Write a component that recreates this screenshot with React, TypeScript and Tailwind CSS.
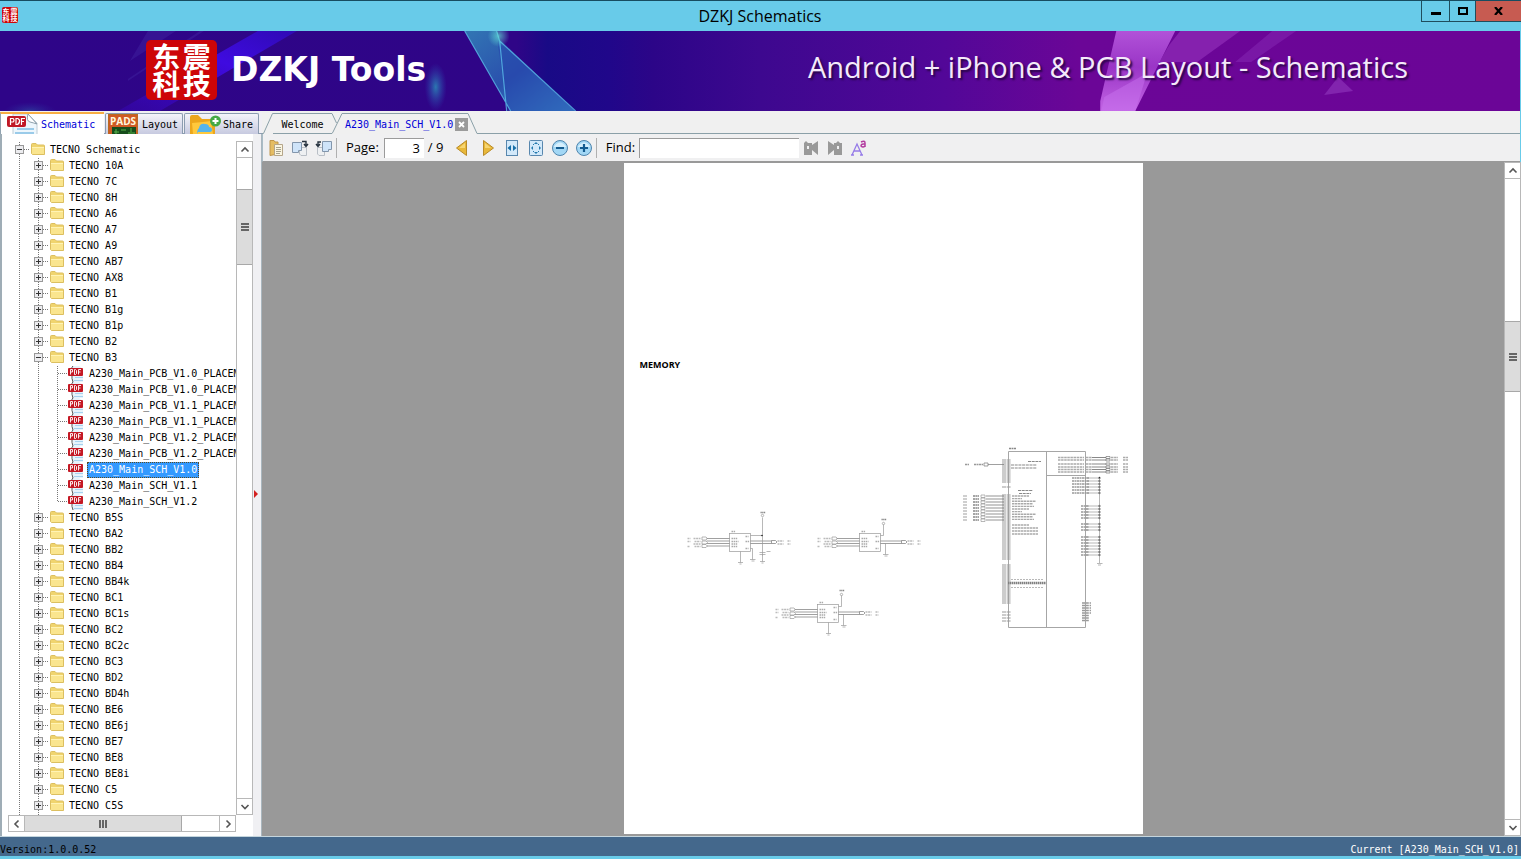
import type { ReactNode } from "react";

const mono = "font-['DejaVu_Sans_Mono','Liberation_Mono',monospace] text-[10px]";

type Line = "none" | "line" | "plus" | "minus" | "branch" | "last";

const models = ["10A", "7C", "8H", "A6", "A7", "A9", "AB7", "AX8", "B1", "B1g", "B1p", "B2"];
const openModelFiles = [
  "A230_Main_PCB_V1.0_PLACEMENT_BOT",
  "A230_Main_PCB_V1.0_PLACEMENT_TOP",
  "A230_Main_PCB_V1.1_PLACEMENT_BOT",
  "A230_Main_PCB_V1.1_PLACEMENT_TOP",
  "A230_Main_PCB_V1.2_PLACEMENT_BOT",
  "A230_Main_PCB_V1.2_PLACEMENT_TOP",
  "A230_Main_SCH_V1.0",
  "A230_Main_SCH_V1.1",
  "A230_Main_SCH_V1.2",
];
const moreModels = [
  "B5S", "BA2", "BB2", "BB4", "BB4k", "BC1", "BC1s", "BC2", "BC2c", "BC3", "BD2", "BD4h",
  "BE6", "BE6j", "BE7", "BE8", "BE8i", "C5", "C5S", "C7",
];

function Cell({ kind }: { kind: Line }) {
  const node = kind === "plus" || kind === "minus";
  return (
    <svg width="19" height="16" className="shrink-0" shapeRendering="crispEdges" aria-hidden="true">
      {kind !== "none" && (
        <path d={kind === "last" ? "M9.5 0V8" : "M9.5 0V16"} stroke="#777" strokeDasharray="1 1" fill="none" />
      )}
      {(node || kind === "branch" || kind === "last") && (
        <path d="M10 7.5H19" stroke="#777" strokeDasharray="1 1" />
      )}
      {node && (
        <>
          <rect x="5.5" y="3.5" width="8" height="8" fill="#ececef" stroke="#999" />
          <path d={kind === "plus" ? "M7 7.5H12M9.5 5V10" : "M7 7.5H12"} stroke="#333" />
        </>
      )}
    </svg>
  );
}

function Folder() {
  return (
    <svg width="17" height="16" className="shrink-0" aria-hidden="true">
      <path d="M2.500 11.500V2.500Q2.500 1.500 3.500 1.500H7L8.500 3H14.500Q15.500 3 15.500 4V12.500H3.500Z" fill="#f0d46e" stroke="#dcbf60" />
      <path d="M3 5H15V12H3Z" fill="#fae58e" />
      <path d="M3 5.500H15" stroke="#fff3b4" />
    </svg>
  );
}

function PdfIcon() {
  return (
    <svg width="17" height="16" className="shrink-0" aria-hidden="true">
      <path d="M5 0H12L16 3V16H6Z" fill="#e6f3fb" />
      <path d="M6 0Q4.500 1 5 3M5 10Q4.500 12 6 16" stroke="#555" fill="none" />
      <path d="M8 11.500H16M7 14.500H16" stroke="#a6d2ef" />
      <rect x="1" y="2" width="15" height="8" rx="1" fill="#c41824" />
      <path d="M3.500 8.500V3.500H5.500V6H3.500M7.500 3.500V8.500H8.500L9.500 7.500V4.500L8.500 3.500ZM11.500 8.500V3.500H14M11.500 6H13.500" stroke="#fff" strokeWidth=".9" fill="none" />
    </svg>
  );
}

function TreeRow({ cells, icon, label, selected }: { cells: Line[]; icon: ReactNode; label: string; selected?: boolean }) {
  return (
    <li className="flex h-4 shrink-0 items-center">
      {cells.map((c, i) => (
        <Cell key={i} kind={c} />
      ))}
      {icon}
      <button
        className={
          selected
            ? "ml-[3px] h-4 whitespace-pre bg-[#3399ff] px-[2px] text-white outline-1 -outline-offset-1 outline-dotted outline-[#5a4a20]"
            : cells.length === 3
              ? "ml-[3px] h-4 whitespace-pre px-[2px]"
              : "ml-[3px] h-4 whitespace-pre px-px"
        }
      >
        {label}
      </button>
    </li>
  );
}

function Tree() {
  return (
    <ul className={`${mono} flex min-h-0 flex-1 flex-col overflow-hidden pl-[2px] leading-4 text-black`}>
      <TreeRow cells={["minus"]} icon={<Folder />} label="TECNO Schematic" />
      {models.map((m) => (
        <TreeRow key={m} cells={["line", "plus"]} icon={<Folder />} label={`TECNO ${m}`} />
      ))}
      <TreeRow cells={["line", "minus"]} icon={<Folder />} label="TECNO B3" />
      {openModelFiles.map((f, i) => (
        <TreeRow
          key={f}
          cells={["line", "line", i === openModelFiles.length - 1 ? "last" : "branch"]}
          icon={<PdfIcon />}
          label={f}
          selected={i === 6}
        />
      ))}
      {moreModels.map((m) => (
        <TreeRow key={m} cells={["line", "plus"]} icon={<Folder />} label={`TECNO ${m}`} />
      ))}
    </ul>
  );
}

const arrows = {
  up: "M4.500 9.500L8 6L11.500 9.500",
  down: "M4.500 6L8 9.500L11.500 6",
  left: "M9.500 4.500L6 8L9.500 11.500",
  right: "M6.500 4.500L10 8L6.500 11.500",
};

function ArrowButton({ dir }: { dir: keyof typeof arrows }) {
  return (
    <button aria-label={`Scroll ${dir}`} className="flex size-[17px] shrink-0 items-center justify-center border border-[#b8b8b8] bg-white">
      <svg width="16" height="16" className="shrink-0" aria-hidden="true">
        <path d={arrows[dir]} stroke="#555" strokeWidth="1.600" fill="none" />
      </svg>
    </button>
  );
}

function VerticalBar({ className, thumb }: { className: string; thumb: string }) {
  return (
    <div className={`flex w-[17px] shrink-0 flex-col border-x border-[#b8b8b8] bg-white ${className}`}>
      <div className="-mx-px">
        <ArrowButton dir="up" />
      </div>
      <div className="flex min-h-0 flex-1 flex-col">
        <div className={`flex shrink-0 flex-col items-center justify-center gap-px border-y border-[#a8a8a8] bg-[#dcdcdc] ${thumb}`}>
          <span className="h-[2px] w-2 bg-[#666]" />
          <span className="h-[2px] w-2 bg-[#666]" />
          <span className="h-[2px] w-2 bg-[#666]" />
        </div>
      </div>
      <div className="-mx-px">
        <ArrowButton dir="down" />
      </div>
    </div>
  );
}

function Banner() {
  return (
    <header className="relative flex h-20 shrink-0 items-center justify-between overflow-hidden bg-[#2f0587] pr-[112px] pb-[2px] pl-[146px]">
      <svg className="absolute inset-0 size-full" viewBox="0 0 1521 80" preserveAspectRatio="none" aria-hidden="true">
        <defs>
          <linearGradient id="base" x1="0" x2="1">
            <stop offset="0" stopColor="#2e0588" />
            <stop offset=".34" stopColor="#2f0587" />
            <stop offset=".36" stopColor="#190a86" />
            <stop offset=".4" stopColor="#20078a" />
            <stop offset=".43" stopColor="#2c0588" />
            <stop offset=".5" stopColor="#3d088f" />
            <stop offset=".62" stopColor="#520798" />
            <stop offset=".71" stopColor="#6b0697" />
            <stop offset="1" stopColor="#6b0597" />
          </linearGradient>
          <linearGradient id="beam" x1="1" y1="0" x2="0" y2="1">
            <stop offset="0" stopColor="#2f0ab4" />
            <stop offset=".4" stopColor="#3f0be0" />
            <stop offset="1" stopColor="#3606b0" stopOpacity=".5" />
          </linearGradient>
          <linearGradient id="glass" x1="0" x2="1" y2="1">
            <stop offset="0" stopColor="#3276b4" />
            <stop offset=".5" stopColor="#2a50ad" />
            <stop offset="1" stopColor="#3e9bd0" />
          </linearGradient>
          <linearGradient id="pink" x1="0" x2="0" y2="1">
            <stop offset="0" stopColor="#b152d8" />
            <stop offset=".45" stopColor="#9a35c6" />
            <stop offset="1" stopColor="#c264e4" />
          </linearGradient>
          <radialGradient id="glow">
            <stop offset="0" stopColor="#2b8cb8" stopOpacity=".85" />
            <stop offset="1" stopColor="#2b50b8" stopOpacity="0" />
          </radialGradient>
          <radialGradient id="spark">
            <stop offset="0" stopColor="#63e3d8" stopOpacity=".7" />
            <stop offset="1" stopColor="#63e3d8" stopOpacity="0" />
          </radialGradient>
        </defs>
        <rect width="1521" height="80" fill="url(#base)" />
        <path d="M258 0H297L160 80H118Z" fill="url(#beam)" />
        <path d="M148 0H176L130 30ZM204 0L128 50V48L200 0Z" fill="#4327a4" opacity=".4" />
        <ellipse cx="436" cy="56" rx="11" ry="24" fill="url(#glow)" />
        <ellipse cx="30" cy="80" rx="26" ry="9" fill="url(#glow)" opacity=".4" />
        <path d="M465 0H497L500 10L575 80H511Z" fill="url(#glass)" />
        <path d="M500 8L575 80H508L498 12Z" fill="#2746ad" opacity=".55" />
        <path d="M465 0L511 80M497 0L500 10L507 80M500 10L576 80" stroke="#5abde8" strokeWidth="1.200" fill="none" opacity=".8" />
        <ellipse cx="499" cy="5" rx="11" ry="11" fill="url(#spark)" />
        <path d="M1117 0H1176L1136 80H1101L1101 70Z" fill="url(#pink)" />
        <path d="M1105 66L1148 42L1136 80H1102Z" fill="#c871ee" opacity=".5" />
        <path d="M1181 0H1241L1198 31H1160L1170 14Z" fill="#8d2bb5" opacity=".75" />
        <path d="M1273 0H1297L1252 31H1236Z" fill="#8122ad" opacity=".65" />
        <path d="M1339 46L1354 60L1325 64Z" fill="#8224ae" />
      </svg>
      <div className="relative flex items-center gap-[14px]">
        <div className="grid h-[60px] w-[71px] grid-cols-2 place-content-center justify-items-center rounded-[5px] bg-[#cd0508] px-[5px] font-['Noto_Sans_CJK_SC',sans-serif] text-[28px] leading-[27px] font-bold text-white">
          <span>东</span>
          <span>震</span>
          <span>科</span>
          <span>技</span>
        </div>
        <h1 className="font-['DejaVu_Sans',sans-serif] text-[33px] leading-10 font-bold whitespace-nowrap text-white">DZKJ Tools</h1>
      </div>
      <p className="relative mb-[6px] font-['Open_Sans',sans-serif] text-[29px] leading-10 whitespace-nowrap text-[#f4eafa] [text-shadow:2px_2px_2px_#2a0648]">
        Android + iPhone &amp; PCB Layout - Schematics
      </p>
    </header>
  );
}

function SideTabs() {
  const idle = "mt-px flex h-[21px] items-center overflow-hidden rounded-t-[2px] border border-b-0 border-[#8b9cb0] bg-linear-to-b from-[#f4f4fa] to-[#c7cae0]";
  return (
    <div role="tablist" aria-label="Library" className={`${mono} flex h-[22px] shrink-0 gap-px border-b border-[#8b9cb0] bg-[#f0eff4]`}>
      <button role="tab" aria-selected="true" className="-mb-px flex h-[22px] w-[104px] items-center gap-[3px] overflow-hidden border-t-2 border-l border-t-[#f8ad42] border-l-[#91a3b0] bg-white pl-[6px] text-[#0000d8]">
        <svg width="31" height="20" className="shrink-0" aria-hidden="true">
          <path d="M6 0H21L30 9V21H6Z" fill="#edf6fc" stroke="#bdccd5" />
          <path d="M21 0Q19 7 23 8T30 10Z" fill="#fff" stroke="#8ea1ad" />
          <path d="M10 15H27M8 19H27" stroke="#9acbe9" strokeWidth="2" />
          <rect x="0" y="2" width="19" height="11" rx="2" fill="#c01826" />
          <path d="M3.500 11V4.500H6Q8 6 6 8H3.500M9 4.500V10.500H10.500Q13 9 12.500 6L11 4.500ZM14.500 11V4.500H18M14.500 7.500H17" stroke="#fff" fill="none" strokeWidth="1.200" />
        </svg>
        Schematic
      </button>
      <button role="tab" aria-selected="false" className={`${idle} w-[78px] gap-1 pl-[2px]`}>
        <svg width="30" height="20" className="shrink-0" aria-hidden="true">
          <rect width="30" height="20" fill="#b86b22" />
          <rect x="1" y="1" width="28" height="19" fill="#cf5a24" />
          <rect x="4" y="13" width="24" height="7" fill="#164d1b" />
          <path d="M6 18H11M13 16H18M20 19H27M8 15V20M23 14V18" stroke="#59b34b" />
          <text x="2" y="11" fontFamily="Open Sans, sans-serif" fontSize="10" fontWeight="700" fill="#fff7df">PADS</text>
        </svg>
        Layout
      </button>
      <button role="tab" aria-selected="false" className={`${idle} w-[75px] gap-[2px] pl-1`}>
        <svg width="32" height="20" className="shrink-0" aria-hidden="true">
          <path d="M1 3Q1 1 3 1H9L13 5H23Q26 5 26 8V20H1Z" fill="#eca61c" />
          <path d="M3 9L14 8L22 7L24 20H4Z" fill="#ffc83c" />
          <path d="M9 20Q7 17 10 14Q11 9 16 10Q20 10 20 13Q23 13 23 16Q23 18 20 18H9Z" fill="#56b4eb" />
          <circle cx="26.500" cy="7" r="5.500" fill="#45aa45" />
          <path d="M26.500 4V10M23.500 7H29.500" stroke="#fff" strokeWidth="2" />
        </svg>
        Share
      </button>
    </div>
  );
}

function DocumentTabs() {
  const edge = "#8ba0a8";
  return (
    <div role="tablist" aria-label="Documents" className={`${mono} flex h-[22px] shrink-0 items-stretch pt-px`}>
      <svg width="11" height="21" className="shrink-0" aria-hidden="true">
        <path d="M0 20.500H1.500L10.500 .5H11" stroke={edge} fill="none" />
      </svg>
      <button role="tab" aria-selected="false" className="w-[59px] border-y border-[#8ba0a8] pt-px text-center text-black">
        Welcome
      </button>
      <svg width="12" height="21" className="shrink-0" aria-hidden="true">
        <path d="M0 .5L4.500 10M0 20.500L1 19L10 .5H12" stroke={edge} fill="none" />
      </svg>
      <div className="flex w-[124px] items-center gap-[2px] border-t border-[#8ba0a8] pt-px pl-[1px] text-[#0000d8]">
        <button role="tab" aria-selected="true">
          A230_Main_SCH_V1.0
        </button>
        <button aria-label="Close tab" className="flex size-[13px] items-center justify-center bg-[#9b9b9b]">
          <svg width="7" height="7" aria-hidden="true">
            <path d="M1 1L6 6M6 1L1 6" stroke="#fff" strokeWidth="1.800" />
          </svg>
        </button>
      </div>
      <svg width="10" height="21" className="shrink-0" aria-hidden="true">
        <path d="M0 .5L9 20.500H10" stroke={edge} fill="none" />
      </svg>
      <div className="flex-1 border-b border-[#8ba0a8]" />
    </div>
  );
}

function Tool({ label, children }: { label: string; children: ReactNode }) {
  return (
    <button aria-label={label} className="flex size-6 shrink-0 items-center justify-center">
      <svg width="18" height="18" viewBox="0 0 18 18" aria-hidden="true">
        {children}
      </svg>
    </button>
  );
}

function Toolbar() {
  const sheet = (x: number, y: number, fill: string) => (
    <path d={`M${x} ${y}h9v8h-3v2h-6z`} fill={fill} stroke="#8396ac" />
  );
  return (
    <div className="flex h-7 shrink-0 items-center border-b border-l border-[#a9bcc6] border-b-[#999] bg-[#f0f0f1] pl-px font-['Open_Sans',sans-serif] text-[13px] text-black">
      <Tool label="Copy">
        <path d="M3 1.500H7L8 3H11V15L3 16.500Z" fill="#e5bd62" stroke="#c0964a" />
        <path d="M7.500 5.500H15.500V16.500H7.500Z" fill="#fbf6e2" stroke="#b5a68a" />
        <path d="M9 8.500H14M9 10.500H14M9 12.500H14M9 14.500H13" stroke="#a8a48f" />
      </Tool>
      <Tool label="Rotate right">
        <path d="M8.500 8.500H15.500V16.500H10L8.500 15Z" fill="#eef0f2" stroke="#b9bfc6" />
        {sheet(1.5, 3.5, "#cfe4f9")}
        <path d="M11 2.500H15V6M13 5L15 7.500L17 5" stroke="#26323e" strokeWidth="1.400" fill="none" />
      </Tool>
      <Tool label="Rotate left">
        <path d="M2.500 8.500H9.500V16.500H4L2.500 15Z" fill="#eef0f2" stroke="#b9bfc6" />
        {sheet(7.5, 2.5, "#cfe4f9")}
        <path d="M6 3H3V6M1 5L3 7.500L5 5" stroke="#26323e" strokeWidth="1.400" fill="none" />
      </Tool>
      <span className="h-5 w-px bg-[#b0b0b0]" />
      <label htmlFor="page" className="ml-[9px]">Page:</label>
      <input id="page" defaultValue="3" className="ml-[5px] h-5 w-10 border-t border-l border-[#9b9b9b] bg-white pr-1 text-right outline-none" />
      <span className="ml-1 w-[18px] whitespace-nowrap">/ 9</span>
      <div className="ml-1 flex items-center gap-[2px]">
        <Tool label="Previous page">
          <path d="M13.500 1.500V16.500L3.500 9Z" fill="#e8b83a" stroke="#b98b28" />
          <path d="M12 4L6 9H12Z" fill="#f7d672" />
        </Tool>
        <Tool label="Next page">
          <path d="M4.500 1.500V16.500L14.500 9Z" fill="#e8b83a" stroke="#b98b28" />
          <path d="M6 4L12 9H6Z" fill="#f7d672" />
        </Tool>
      </div>
      <Tool label="Fit width">
        <rect x="3.500" y="1.500" width="11" height="15" fill="#d3e9fa" stroke="#5887ae" />
        <path d="M8 6V12L4.500 9ZM10 6V12L13.500 9Z" fill="#176fa8" />
      </Tool>
      <Tool label="Fit page">
        <rect x="2.500" y="1.500" width="13" height="15" rx="1" fill="#d3e9fa" stroke="#5887ae" />
        <path d="M7 5L9 3L11 5ZM7 13L9 15L11 13ZM6 7L4 9L6 11ZM12 7L14 9L12 11Z" fill="#277bae" />
        <path d="M6 6L7 5M11 5L12 6M6 12L7 13M11 13L12 12" stroke="#277bae" />
      </Tool>
      <Tool label="Zoom out">
        <circle cx="9" cy="9" r="7.500" fill="#a2d7f5" stroke="#4f85ae" />
        <path d="M2.500 8Q9 -1 15.500 8Z" fill="#d5effd" />
        <path d="M5 9H13" stroke="#145c91" strokeWidth="2" />
      </Tool>
      <Tool label="Zoom in">
        <circle cx="9" cy="9" r="7.500" fill="#a2d7f5" stroke="#4f85ae" />
        <path d="M2.500 8Q9 -1 15.500 8Z" fill="#d5effd" />
        <path d="M5 9H13M9 5V13" stroke="#145c91" strokeWidth="2.200" />
      </Tool>
      <span className="h-5 w-px bg-[#b0b0b0]" />
      <label htmlFor="find" className="ml-[9px]">Find:</label>
      <input id="find" className="ml-1 h-5 w-40 border-t border-l border-[#9b9b9b] bg-white px-1 outline-none" />
      <Tool label="Find previous">
        <path d="M2 4L4 2L6 4H10V6L16 2V16L10 11V16H2ZM5 7V10H7V7Z" fill="#999" />
      </Tool>
      <Tool label="Find next">
        <path d="M2 2L8 6V4H10L12 2L14 4H16V16H8V11L2 16ZM11 7V10H13V7Z" fill="#999" />
      </Tool>
      <Tool label="Match case">
        <path d="M2 16L7 5L12 16M4 12H10M1 16H4M10 16H13" stroke="#967ce8" strokeWidth="1.300" fill="none" />
        <path d="M11 3Q15 1 15 4V8M15 5Q11 4.500 11 7Q13 9 15 7" stroke="#b33ca0" strokeWidth="1.500" fill="none" />
      </Tool>
    </div>
  );
}

function Chip({ x, y, tall }: { x: number; y: number; tall?: boolean }) {
  return (
    <g transform={`translate(${x} ${y})`} stroke="#999" strokeWidth=".7" fill="none">
      <rect x="0" y="0" width="21" height="18" />
      {[5, 7.5, 10, 12.5].map((p) => (
        <path key={p} d={`M-23 ${p}H0`} stroke="#777" />
      ))}
      {[5, 9, 12.500].map((p) => (
        <path key={p} d={`M-27.500 ${p - 1.500}h4l1.500 1.500l-1.500 1.500h-4z`} />
      ))}
      <path d="M-42 5H-39M-36 5H-29M-42 8H-39M-35 8H-29M-42 13H-40M-35 13H-29M-36 10.500H-29" stroke="#bbb" strokeWidth="1.500" strokeDasharray="2 .6" />
      <path d="M2 5H8M2 8H9M2 10.500H8M2 13H8M16 3H19M16 8H20M16 15H19M2 -2H6" stroke="#aaa" strokeWidth="1.500" strokeDasharray="1.500 .6" />
      <path d="M21 7.500H42M21 10H42M42 7h4l1.500 1.500l-1.500 1.500h-4z" stroke="#777" />
      <path d="M48 7.500H54M48 10.500H54M58 7.500H61M58 10.500H61" stroke="#bbb" strokeWidth="1.500" strokeDasharray="2 .6" />
      <path d={tall ? "M21 2H33M33 -16V22" : "M21 2H24V-9"} />
      <path d="M21 15H23V26M20.500 26H26M22 27.500H25" transform={tall ? undefined : "translate(3 -5)"} />
      {(tall || y > 410) && <path d="M11 18V29M8.500 29H13.500M10 30.500H12" />}
      {tall && <path d="M30 19H36M30 21H36M33 21V28M30.500 28H35.500M32 29.500H34M37 18H41" />}
      {tall && <circle cx="32.500" cy="2" r=".8" fill="#222" stroke="none" />}
      <circle cx={tall ? 33 : 24} cy={tall ? -18 : -10} r="1.200" />
      <path d={tall ? "M31 -21H36" : "M22 -14H27"} stroke="#888" strokeWidth="1.600" strokeDasharray="1.300 .4" />
    </g>
  );
}

function range(from: number, to: number, step: number) {
  const out: number[] = [];
  for (let v = from; v <= to; v += step) out.push(v);
  return out;
}

function MemoryChip() {
  const leftPins = [...range(297, 319, 2), 324, ...range(332, 396, 2), ...range(402, 441, 2), ...range(449, 458, 3)];
  const inner = [...range(333, 359, 2.600), 362, 365, 368, 371];
  const ground = [...range(315, 331, 3), ...range(343, 356, 3), ...range(361, 369, 3), ...range(374, 393, 3)];
  return (
    <g stroke="#999" strokeWidth=".7" fill="none">
      <path d="M384.500 288.500H461.500V464.500H384.500ZM422.500 288.500V464.500M422.500 312.500H461.500" stroke="#a6a6a6" strokeWidth="1" />
      <path d="M385 285.500H392" stroke="#888" strokeWidth="1.500" strokeDasharray="2 .5" />
      {leftPins.map((y) => (
        <path key={y} d={`M378 ${y}H387`} strokeWidth="1.100" strokeDasharray="4 .6" />
      ))}
      {inner.map((y, i) => (
        <path key={y} d={`M388 ${y}H${i > 10 ? 414 : [405, 398, 412, 409, 410][i % 5]}`} stroke="#aaa" strokeWidth="1.400" strokeDasharray="2.500 .5" />
      ))}
      <path d="M404 298.500H417M394 327.500H409M395 330.500H407M387 302H413M387 305H413" stroke="#888" strokeWidth="1.200" strokeDasharray="3 .7" />
      <path d="M387 416.500H420M387 424.500H420" strokeDasharray="2 1" />
      <path d="M384 420H422" stroke="#808080" strokeWidth="2.400" strokeDasharray="1.500 .5" />
      {range(333, 358, 3).map((y) => (
        <g key={y}>
          <path d={`M362 ${y}H380`} stroke="#666" />
          <path d={`M357 ${y - 1}h4v2.500h-4z`} />
          <path d={`M349 ${y}H355`} stroke="#888" strokeWidth="1.500" strokeDasharray="2 .4" />
          <path d={`M339 ${y}H343`} stroke="#bbb" strokeWidth="1.400" />
        </g>
      ))}
      <path d="M364 301.500H380M360 300h4v3h-4z" stroke="#777" />
      <path d="M341 301.500H345M350 301.500H359" strokeDasharray="2 .5" strokeWidth="1.500" />
      {[294.5, 297, 301, 304, 306.5, 309].map((y) => (
        <g key={y}>
          <path d={`M434 ${y}H460M462 ${y}H468M487 ${y}H494M499 ${y}H504`} stroke="#aaa" strokeWidth="1.400" strokeDasharray="2.500 .6" />
          <path d={`M468 ${y}H482`} stroke="#555" />
          <path d={`M482 ${y - 1}h4v2h-4z`} stroke="#777" />
        </g>
      ))}
      {ground.map((y) => (
        <g key={y}>
          <path d={`M462 ${y}H475`} />
          <path d={`M${y < 335 ? 448 : 457} ${y}H465`} strokeWidth="1.500" strokeDasharray="2 .5" />
          <circle cx="475.500" cy={y} r=".7" fill="#111" stroke="#111" />
        </g>
      ))}
      <path d="M475.500 315V400M473 400.500H478.500M474 402H477" />
      {range(440, 459, 2.500).map((y) => (
        <path key={y} d={`M458 ${y}H${y > 450 ? 465 : 467}`} strokeWidth="1.300" strokeDasharray="3 .8" />
      ))}
    </g>
  );
}

function Sheet() {
  return (
    <article className="relative mt-px mb-[2px] w-[519px] overflow-hidden bg-white pt-[196px] pl-4">
      <h2 className="font-['Open_Sans',sans-serif] text-[9px] leading-3 font-bold text-black">MEMORY</h2>
      <svg width="519" height="671" className="absolute top-0 left-0" role="img" aria-label="Memory schematic">
        <Chip x={105.5} y={370.5} tall />
        <Chip x={235.5} y={370.5} />
        <Chip x={193.5} y={441.5} />
        <MemoryChip />
      </svg>
    </article>
  );
}

export default function App() {
  return (
    <div className="flex h-screen flex-col overflow-hidden bg-[#68cbe9]">
      <div className="relative flex h-[31px] shrink-0 items-center justify-center border-t border-[#174c60] pr-px pb-px font-['Open_Sans',sans-serif] text-[16px] text-black">
        <div className="absolute top-[6px] left-[2px] grid size-4 grid-cols-2 place-content-center justify-items-center rounded-[2px] bg-[#cd0508] font-['Noto_Sans_CJK_SC',sans-serif] text-[7px] leading-[7px] font-bold text-white" aria-hidden="true">
          <span>东</span>
          <span>震</span>
          <span>科</span>
          <span>技</span>
        </div>
        <span>DZKJ Schematics</span>
        <div className="absolute top-0 right-0 flex h-[21px] border-b border-l border-[#1f4d5d]">
          <button aria-label="Minimize" className="flex w-7 items-center justify-center border-r border-[#1f4d5d]">
            <svg width="10" height="10" aria-hidden="true">
              <path d="M0 7.500H10" stroke="#000" strokeWidth="3" />
            </svg>
          </button>
          <button aria-label="Maximize" className="flex w-[26px] items-center justify-center border-r border-[#1f4d5d]">
            <svg width="10" height="8" aria-hidden="true">
              <rect x="1" y="1" width="8" height="6" fill="none" stroke="#000" strokeWidth="2" />
            </svg>
          </button>
          <button aria-label="Close" className="flex w-[45px] items-center justify-center bg-[#c75b51]">
            <svg width="9" height="8" aria-hidden="true">
              <path d="M1 0L8 8M8 0L1 8" stroke="#000" strokeWidth="2.200" />
            </svg>
          </button>
        </div>
      </div>

      <div className="flex min-h-0 flex-1 flex-col pr-px">
        <Banner />
        <main className="flex min-h-0 flex-1 bg-[#f0f0f0] pt-px">
          <aside className="flex w-[262px] shrink-0 flex-col">
            <SideTabs />
            <div className="flex min-h-0 flex-1">
              <div className="flex min-w-0 flex-1 flex-col border-l-2 border-[#9fadb6] bg-white pt-[7px] pb-1 pl-[6px]">
                <div className="flex min-h-0 flex-1">
                  <div className="flex min-w-0 flex-1 flex-col overflow-hidden pt-px">
                    <Tree />
                  </div>
                  <VerticalBar className="" thumb="mt-[31px] h-[76px]" />
                </div>
                <div className="mr-[17px] flex h-[17px] shrink-0 border-y border-[#b8b8b8] bg-white">
                  <div className="-my-px">
                    <ArrowButton dir="left" />
                  </div>
                  <div className="flex flex-1">
                    <div className="flex w-[157px] items-center justify-center gap-px border-r border-[#a8a8a8] bg-[#dcdcdc]">
                      <span className="h-2 w-[2px] bg-[#666]" />
                      <span className="h-2 w-[2px] bg-[#666]" />
                      <span className="h-2 w-[2px] bg-[#666]" />
                    </div>
                  </div>
                  <div className="-my-px">
                    <ArrowButton dir="right" />
                  </div>
                </div>
              </div>
              <div className="flex w-[9px] shrink-0 items-center border-r border-[#a9b6be] bg-[#f0f0f3]">
                <svg width="6" height="10" className="mt-[18px]" aria-hidden="true">
                  <path d="M1 1L5 5L1 9Z" fill="#d32020" />
                </svg>
              </div>
            </div>
          </aside>
          <section className="flex min-w-0 flex-1 flex-col">
            <DocumentTabs />
            <Toolbar />
            <div className="flex min-h-0 flex-1 bg-[#999]">
              <div className="flex min-w-0 flex-1 justify-center overflow-hidden">
                <Sheet />
              </div>
              <VerticalBar className="-mr-px" thumb="mt-[142px] h-[71px]" />
            </div>
          </section>
        </main>
      </div>

      <footer className={`${mono} mb-[3px] flex h-5 shrink-0 items-center justify-between border-t border-[#c4d5dd] bg-[#44688c] pt-[6px] pr-[2px] leading-3`}>
        <span className="text-black">Version:1.0.0.52</span>
        <span className="text-white">Current [A230_Main_SCH_V1.0]</span>
      </footer>
    </div>
  );
}
